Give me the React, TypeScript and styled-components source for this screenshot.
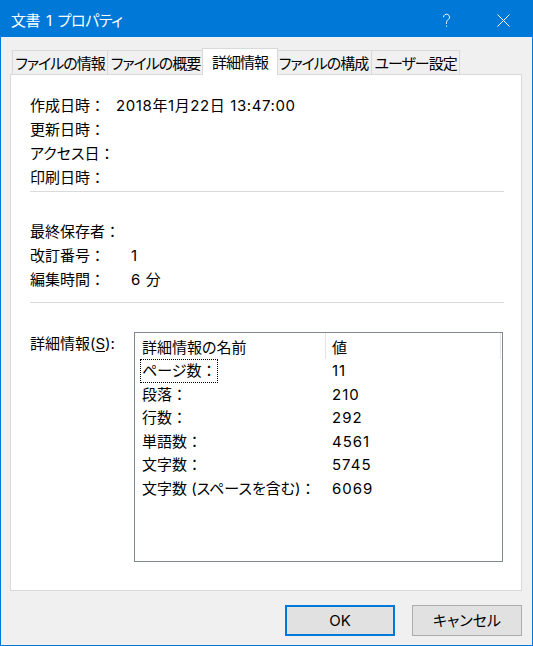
import React from "react";
import styled, { createGlobalStyle } from "styled-components";

const Global = createGlobalStyle`
  html, body { margin: 0; padding: 0; background: #ffffff; }
  * { box-sizing: border-box; }
`;

const Window = styled.div`
  width: 533px;
  height: 646px;
  border: 1px solid #0078d7;
  display: flex;
  flex-direction: column;
  background: #f0f0f0;
  font-family: "Inter", "Noto Sans CJK JP", sans-serif;
  font-size: 15px;
  line-height: 20px;
  color: #000000;
  font-feature-settings: "palt";
`;

const TitleBar = styled.div`
  flex: none;
  height: 36px;
  background: #0078d7;
  display: flex;
  align-items: center;
  color: #ffffff;
`;

const Title = styled.div`
  flex: 1;
  padding: 3px 0 0 10px;
  font-size: 15px;
  line-height: 20px;
  letter-spacing: -0.4px;
  word-spacing: 2px;
`;

const CaptionButton = styled.div`
  width: 57px;
  height: 36px;
  display: flex;
  align-items: center;
  justify-content: center;
  padding-top: 2px;
`;

const Body = styled.div`
  flex: 1;
  display: flex;
  flex-direction: column;
  padding: 11px 10px 9px 9px;
`;

const TabStrip = styled.div`
  flex: none;
  height: 26px;
  display: flex;
  align-items: flex-end;
  padding-left: 2px;
  position: relative;
  z-index: 1;
`;

const Tab = styled.div<{ $w: number; $active?: boolean }>`
  flex: none;
  width: ${(p) => p.$w}px;
  height: ${(p) => (p.$active ? 27 : 24)}px;
  margin: ${(p) => (p.$active ? "0 -2px -1px -2px" : "0 0 0 -1px")};
  padding-top: ${(p) => (p.$active ? 1 : 3)}px;
  border: 1px solid #d9d9d9;
  border-bottom: none;
  background: ${(p) => (p.$active ? "#ffffff" : "#f0f0f0")};
  display: flex;
  align-items: center;
  justify-content: center;
  white-space: nowrap;
  letter-spacing: -1px;
  position: relative;
  z-index: ${(p) => (p.$active ? 2 : 1)};
  &:first-child {
    margin-left: 0;
  }
`;

const Panel = styled.div`
  flex: none;
  height: 517px;
  border: 1px solid #d9d9d9;
  background: #ffffff;
  padding: 19px 17px 0 19px;
  display: flex;
  flex-direction: column;
  position: relative;
  z-index: 0;
`;

const FieldGroup = styled.div<{ $label: number }>`
  display: grid;
  grid-template-columns: ${(p) => p.$label}px 1fr;
  grid-auto-rows: 24px;
  align-items: center;
  white-space: nowrap;
`;

const Value = styled.span`
  letter-spacing: 0.6px;
`;

const Colon = styled.span`
  font-feature-settings: normal;
`;

const Separator = styled.div<{ $before: number; $after: number }>`
  height: 1px;
  background: #dadada;
  margin-top: ${(p) => p.$before}px;
  margin-bottom: ${(p) => p.$after}px;
`;

const DetailSection = styled.div`
  display: grid;
  grid-template-columns: 104px 369px;
  align-items: start;
`;

const DetailLabel = styled.div`
  line-height: 24px;
  u {
    text-decoration: underline;
    text-underline-offset: 2px;
  }
`;

const ListBox = styled.div`
  width: 369px;
  height: 230px;
  border: 1px solid #828790;
  background: #ffffff;
  display: flex;
  flex-direction: column;
`;

const ListHeader = styled.div`
  display: flex;
  height: 26px;
  flex: none;
`;

const HeaderCell = styled.div<{ $w: number; $pad: number }>`
  width: ${(p) => p.$w}px;
  border-right: 1px solid #e5e5e5;
  padding: 3px 0 0 ${(p) => p.$pad}px;
  display: flex;
  align-items: center;
  white-space: nowrap;
`;

const ListRow = styled.div`
  display: flex;
  height: 23.5px;
  flex: none;
`;

const Cell = styled.div<{ $w: number; $pad: number }>`
  width: ${(p) => p.$w}px;
  padding-left: ${(p) => p.$pad}px;
  display: flex;
  align-items: stretch;
  white-space: nowrap;
`;

const FocusText = styled.span<{ $focused?: boolean; $spaced?: boolean }>`
  display: inline-flex;
  align-items: center;
  padding: 1px 1px 0 1px;
  border: 1px dotted ${(p) => (p.$focused ? "#000000" : "transparent")};
  letter-spacing: ${(p) => (p.$spaced ? "1px" : "normal")};
`;

const ButtonRow = styled.div`
  display: flex;
  justify-content: flex-end;
  gap: 17px;
  margin-top: 14px;
`;

const DialogButton = styled.div<{ $default?: boolean }>`
  width: 110px;
  height: 31px;
  background: #e1e1e1;
  border: ${(p) => (p.$default ? "2px solid #0078d7" : "1px solid #adadad")};
  display: flex;
  align-items: center;
  justify-content: center;
  padding-top: 1px;
`;

const tabs = [
  { label: "ファイルの情報", w: 96 },
  { label: "ファイルの概要", w: 97 },
  { label: "詳細情報", w: 76, active: true },
  { label: "ファイルの構成", w: 97 },
  { label: "ユーザー設定", w: 89 },
];

const dates: [string, string][] = [
  ["作成日時", "2018年1月22日 13:47:00"],
  ["更新日時", ""],
  ["アクセス日", ""],
  ["印刷日時", ""],
];

const stats: [string, string][] = [
  ["最終保存者", ""],
  ["改訂番号", "1"],
  ["編集時間", "6 分"],
];

const details: [string, string][] = [
  ["ページ数", "11"],
  ["段落", "210"],
  ["行数", "292"],
  ["単語数", "4561"],
  ["文字数", "5745"],
  ["文字数 (スペースを含む)", "6069"],
];

function Fields({ rows, label }: { rows: [string, string][]; label: number }) {
  return (
    <FieldGroup $label={label}>
      {rows.map(([name, value]) => (
        <React.Fragment key={name}>
          <span>
            {name}
            <Colon>：</Colon>
          </span>
          <Value>{value}</Value>
        </React.Fragment>
      ))}
    </FieldGroup>
  );
}

export default function App() {
  return (
    <>
      <Global />
      <Window>
        <TitleBar>
          <Title>文書 1 プロパティ</Title>
          <CaptionButton>
            <svg width="9" height="15" viewBox="0 0 9 15" fill="none">
              <path
                d="M1.5 4.2 A3 3 0 1 1 6.3 6.6 C5.1 7.5 4.5 8.1 4.5 9.6 V10.8"
                stroke="#ffffff"
                strokeWidth="1"
              />
              <rect x="4" y="12.6" width="1.1" height="1.1" fill="#ffffff" />
            </svg>
          </CaptionButton>
          <CaptionButton>
            <svg width="13" height="13" viewBox="0 0 13 13" fill="none">
              <path d="M0.5 0.5 L12.5 12.5 M12.5 0.5 L0.5 12.5" stroke="#ffffff" strokeWidth="1" />
            </svg>
          </CaptionButton>
        </TitleBar>
        <Body>
          <TabStrip>
            {tabs.map((t) => (
              <Tab key={t.label} $w={t.w} $active={t.active}>
                {t.label}
              </Tab>
            ))}
          </TabStrip>
          <Panel>
            <Fields rows={dates} label={86} />
            <Separator $before={1} $after={28} />
            <Fields rows={stats} label={101} />
            <Separator $before={10} $after={29} />
            <DetailSection>
              <DetailLabel>
                詳細情報(<u>S</u>):
              </DetailLabel>
              <ListBox>
                <ListHeader>
                  <HeaderCell $w={191} $pad={7}>詳細情報の名前</HeaderCell>
                  <HeaderCell $w={175} $pad={6}>値</HeaderCell>
                </ListHeader>
                {details.map(([name, value], i) => (
                  <ListRow key={name}>
                    <Cell $w={191} $pad={5}>
                      <FocusText $focused={i === 0}>
                        {name}
                        <Colon>：</Colon>
                      </FocusText>
                    </Cell>
                    <Cell $w={175} $pad={4}>
                      <FocusText $spaced>{value}</FocusText>
                    </Cell>
                  </ListRow>
                ))}
              </ListBox>
            </DetailSection>
          </Panel>
          <ButtonRow>
            <DialogButton $default>OK</DialogButton>
            <DialogButton>キャンセル</DialogButton>
          </ButtonRow>
        </Body>
      </Window>
    </>
  );
}
